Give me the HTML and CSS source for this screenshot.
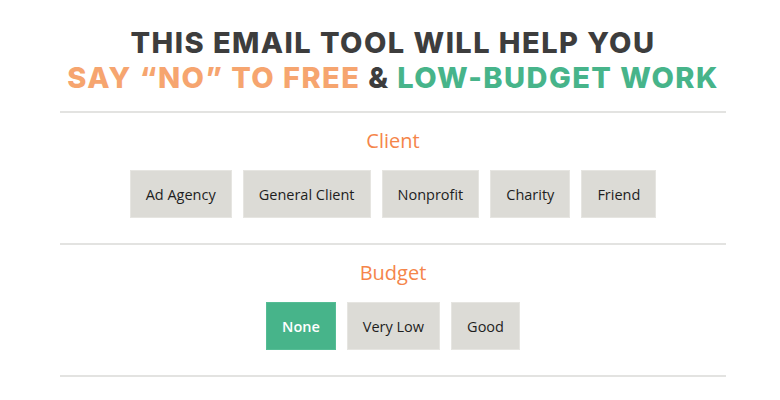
FILE: index.html
```html
<!DOCTYPE html>
<html>
<head>
<meta charset="utf-8">
<link rel="stylesheet" href="styles.css">
</head>
<body>
<div class="page">
  <h1 class="headline">
    <span class="line dark">THIS EMAIL TOOL WILL HELP YOU</span>
    <span class="line"><span class="peach">SAY “NO” TO FREE</span> <span class="dark">&amp;</span> <span class="green">LOW-BUDGET WORK</span></span>
  </h1>
  <section class="group">
    <h2 class="label">Client</h2>
    <div class="options">
      <button class="opt">Ad Agency</button>
      <button class="opt">General Client</button>
      <button class="opt">Nonprofit</button>
      <button class="opt">Charity</button>
      <button class="opt">Friend</button>
    </div>
  </section>
  <section class="group">
    <h2 class="label">Budget</h2>
    <div class="options">
      <button class="opt active">None</button>
      <button class="opt">Very Low</button>
      <button class="opt">Good</button>
    </div>
  </section>
</div>
</body>
</html>
```
FILE: styles.css
```css
html, body {
  margin: 0;
  padding: 0;
  background: #ffffff;
}
.page {
  width: 666px;
  margin-left: 60px;
  padding-top: 25px;
}
.headline {
  margin: 0;
  padding-bottom: 16px;
  border-bottom: 2px solid #e3e3e1;
  text-align: center;
  font-family: "Inter", "DejaVu Sans", sans-serif;
  font-weight: 800;
  font-size: 29px;
  line-height: 35px;
  letter-spacing: 1.45px;
}
.line {
  display: block;
}
.dark { color: #3d3d3d; }
.peach { color: #f6a56f; }
.green { color: #47b48a; }
.group {
  border-bottom: 2px solid #e3e3e1;
  padding-top: 14px;
  padding-bottom: 25px;
  text-align: center;
}
.label {
  margin: 0;
  font-family: "Open Sans", sans-serif;
  font-weight: 400;
  font-size: 20px;
  line-height: 28px;
  color: #f5854a;
}
.options {
  display: flex;
  justify-content: center;
  gap: 11px;
  margin-top: 15px;
}
.opt {
  height: 48px;
  padding: 0 15px;
  border: 1px solid #e6e5e1;
  background: #dcdbd6;
  font-family: "Open Sans", sans-serif;
  font-size: 14.5px;
  color: #1e1e1e;
  cursor: pointer;
}
.opt.active {
  padding: 0 15px;
  background: #47b48a;
  border-color: #55bd95;
  color: #ffffff;
  font-weight: 600;
}
```
